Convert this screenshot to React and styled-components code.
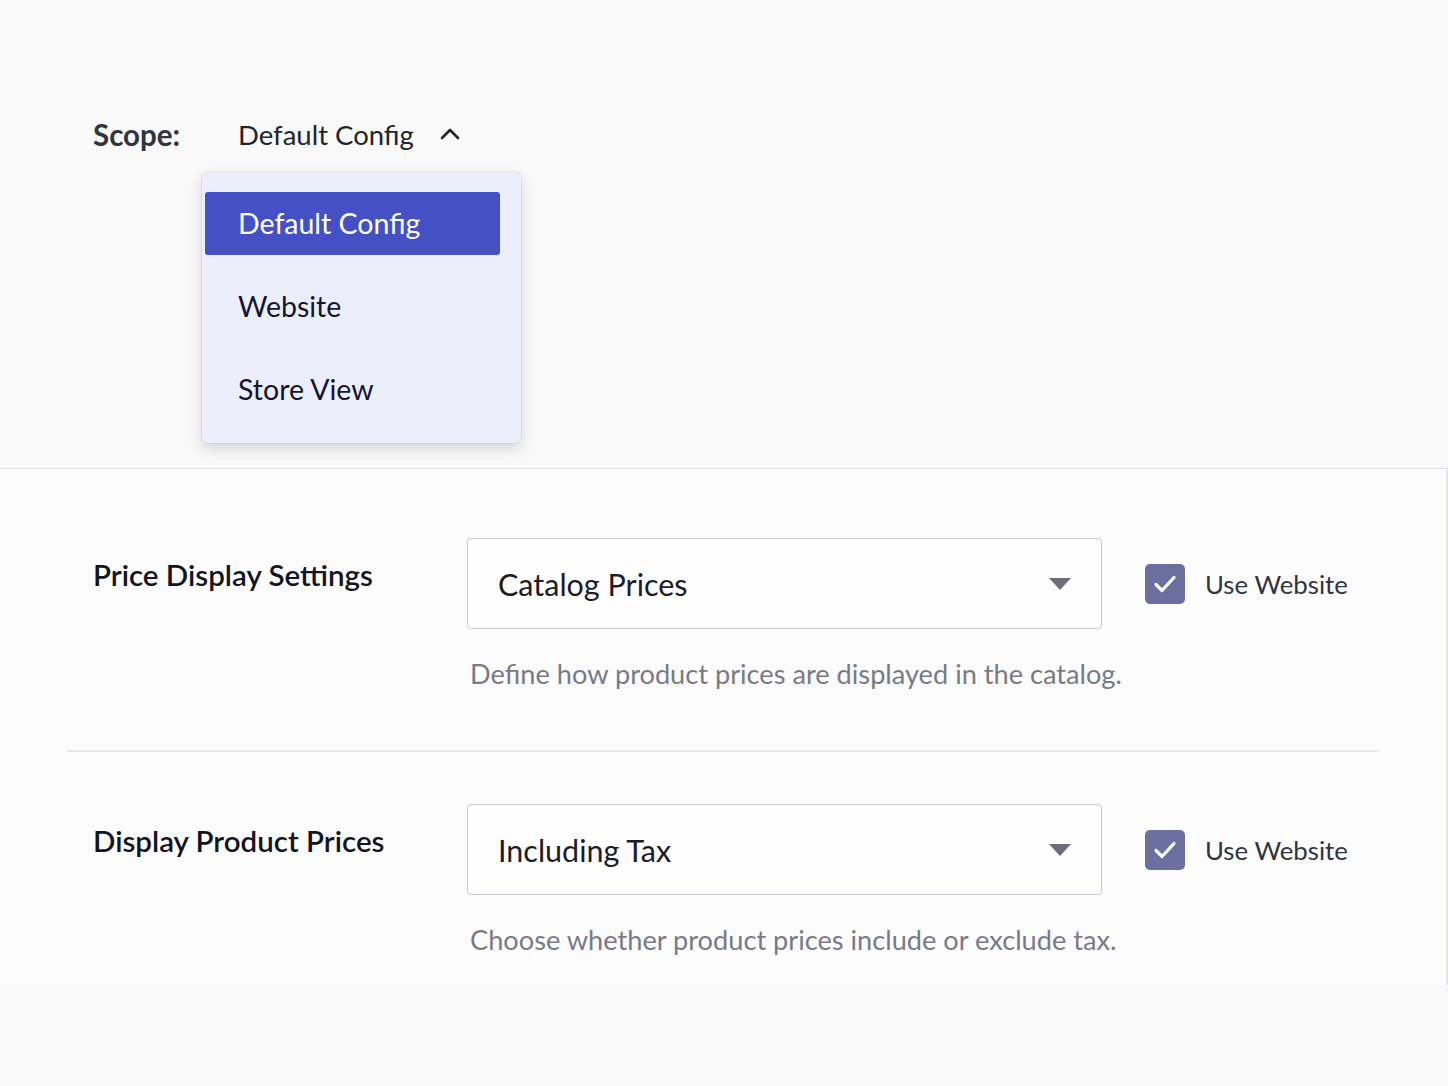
import React from 'react';
import styled, { createGlobalStyle } from 'styled-components';

const Global = createGlobalStyle`
  html, body {
    margin: 0;
    padding: 0;
    background: #f9f9fa;
    font-family: Lato, "Open Sans", sans-serif;
    -webkit-font-smoothing: antialiased;
  }
`;

const Page = styled.div`
  min-height: 100vh;
  background: #f9f9fa;
`;

const Header = styled.div`
  height: 468px;
  padding: 112px 0 0 93px;
  box-sizing: border-box;
`;

const Scope = styled.div`
  display: flex;
  align-items: center;
  height: 44px;
`;

const ScopeLabel = styled.span`
  font-size: 29.5px;
  font-weight: 700;
  color: #34343c;
  width: 145px;
`;

const Trigger = styled.div`
  position: relative;
  display: flex;
  align-items: center;
  gap: 25px;
  font-size: 27.5px;
  color: #23232b;
`;

const Menu = styled.ul`
  position: absolute;
  top: 54px;
  left: -36px;
  width: 319px;
  margin: 0;
  padding: 20px 21px 22px 3px;
  box-sizing: border-box;
  list-style: none;
  background: #eceefb;
  border-radius: 6px;
  box-shadow: 0 6px 14px rgba(40, 40, 70, 0.16), 0 0 0 1px rgba(220, 222, 240, 0.6);
  display: flex;
  flex-direction: column;
  gap: 20px;
`;

const Option = styled.li`
  height: 63px;
  display: flex;
  align-items: center;
  padding-left: 33px;
  border-radius: 3px;
  font-size: 28.5px;
  color: ${({ $active }) => ($active ? '#ffffff' : '#141433')};
  background: ${({ $active }) => ($active ? '#4450c4' : 'transparent')};
`;

const Panel = styled.section`
  background: #fcfcfc;
  border-top: 1px solid #e2e2e8;
  border-right: 2px solid #e6e6ec;
  padding: 17px 0 0 67px;
  box-sizing: border-box;
`;

const Row = styled.div`
  width: 1311px;
  display: grid;
  grid-template-columns: 331px 635px auto;
  column-gap: 43px;
  row-gap: 28px;
  padding: 52px 0 60px 26px;
  box-sizing: border-box;
  & + & {
    border-top: 2px solid #e6e6ec;
  }
  &:last-child {
    padding-bottom: 29px;
  }
`;

const Label = styled.div`
  font-size: 29.5px;
  font-weight: 600;
  color: #14141f;
  padding-top: 19px;
  white-space: nowrap;
`;

const Select = styled.div`
  height: 91px;
  border: 1.5px solid #c9c9d6;
  border-radius: 4px;
  background: #fefefe;
  display: flex;
  align-items: center;
  justify-content: space-between;
  padding: 0 30px 0 30px;
  box-sizing: border-box;
  font-size: 30.5px;
  color: #1c1c26;
`;

const Caret = styled.span`
  width: 0;
  height: 0;
  border-left: 11px solid transparent;
  border-right: 11px solid transparent;
  border-top: 12px solid #6c6c7c;
`;

const Inherit = styled.label`
  display: flex;
  align-items: center;
  gap: 20px;
  font-size: 25.8px;
  color: #34343c;
  white-space: nowrap;
`;

const Check = styled.span`
  width: 40px;
  height: 40px;
  border-radius: 5px;
  background: #6b70a0;
  display: flex;
  align-items: center;
  justify-content: center;
  flex-shrink: 0;
`;

const Help = styled.div`
  grid-column: 2 / 4;
  font-size: 27.2px;
  color: #7a7a86;
  padding-left: 3px;
`;

const ChevronUp = () => (
  <svg width="22" height="14" viewBox="0 0 22 14" fill="none">
    <path d="M3 11 L11 3 L19 11" stroke="#23232b" strokeWidth="2.6" strokeLinecap="round" strokeLinejoin="round" />
  </svg>
);

const Tick = () => (
  <svg width="26" height="22" viewBox="0 0 26 22" fill="none">
    <path d="M4 11.5 L10 17.5 L22 4.5" stroke="#ffffff" strokeWidth="3.2" strokeLinecap="round" strokeLinejoin="round" />
  </svg>
);

const settings = [
  { label: 'Price Display Settings', value: 'Catalog Prices', help: 'Define how product prices are displayed in the catalog.' },
  { label: 'Display Product Prices', value: 'Including Tax', help: 'Choose whether product prices include or exclude tax.' },
];

export default function App() {
  return (
    <Page>
      <Global />
      <Header>
        <Scope>
          <ScopeLabel>Scope:</ScopeLabel>
          <Trigger>
            Default Config
            <ChevronUp />
            <Menu>
              <Option $active>Default Config</Option>
              <Option>Website</Option>
              <Option>Store View</Option>
            </Menu>
          </Trigger>
        </Scope>
      </Header>
      <Panel>
        {settings.map((s) => (
          <Row key={s.label}>
            <Label>{s.label}</Label>
            <Select>
              {s.value}
              <Caret />
            </Select>
            <Inherit>
              <Check><Tick /></Check>
              Use Website
            </Inherit>
            <Help>{s.help}</Help>
          </Row>
        ))}
      </Panel>
    </Page>
  );
}
